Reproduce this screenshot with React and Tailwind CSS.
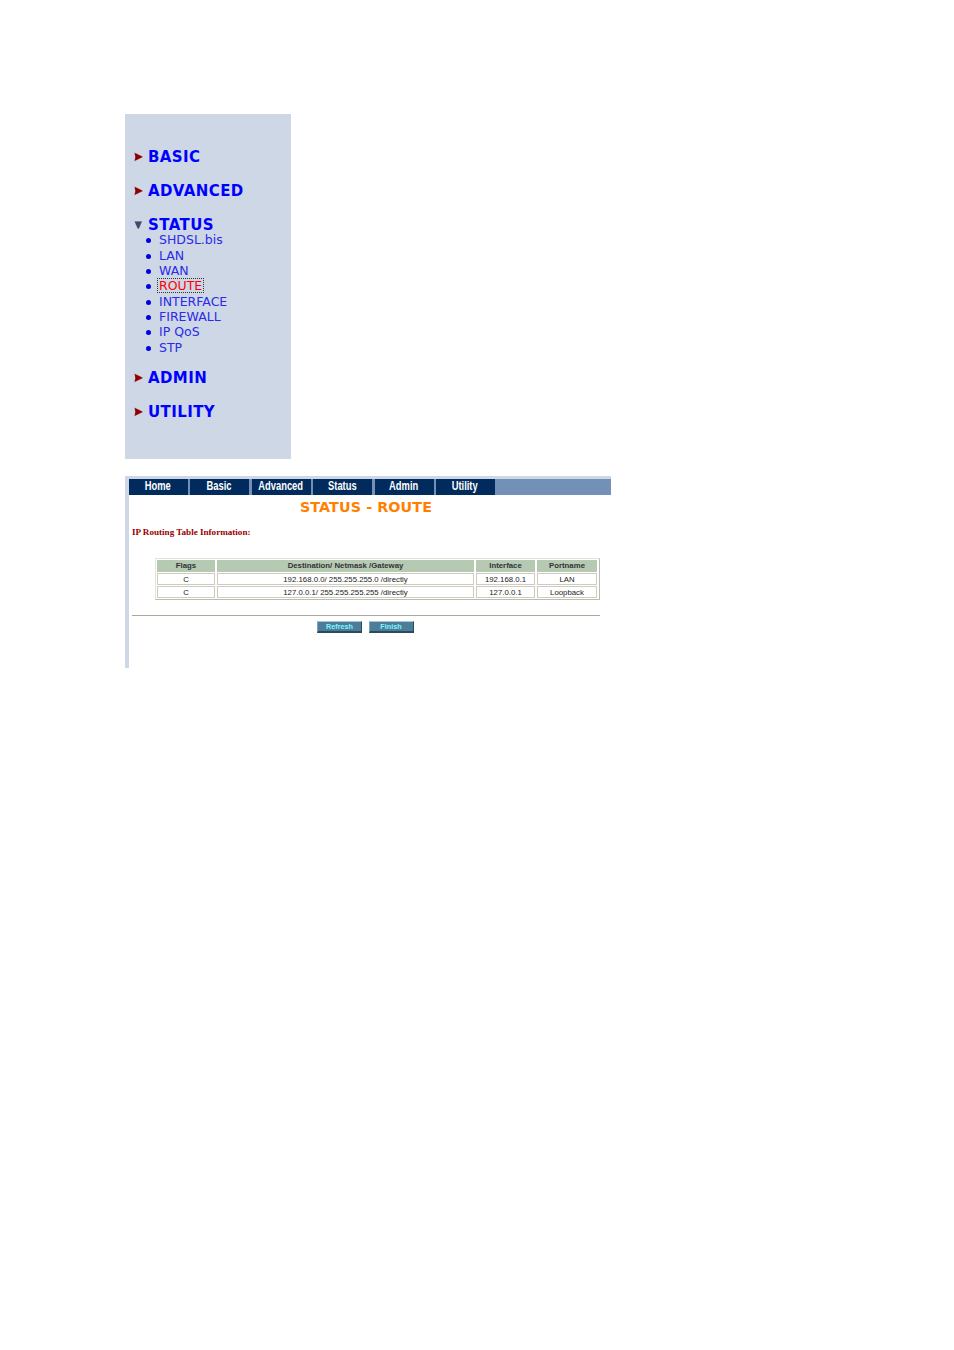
const Arrow = ({ down }) => (
  <svg width="9" height="10" viewBox="0 0 9 10" className="shrink-0">
    {down ? (
      <path d="M0.3 1.2 H8.2 L5 8.8 H3.6 Z" fill="#3f4a72" stroke="#ffffff" strokeOpacity="0.5" strokeWidth="0.4" />
    ) : (
      <path d="M0.4 0.6 L8.6 4.6 V5.2 L0.4 9.2 L1.2 5 Z" fill="#8b0000" stroke="#ffffff" strokeOpacity="0.45" strokeWidth="0.4" />
    )}
  </svg>
);

const Head = ({ label, down }) => (
  <div className="flex items-center h-[18px]">
    <span className="w-[14px] ml-[9px] flex"><Arrow down={down} /></span>
    <span className="text-[15px] leading-[18px] font-bold text-[#0000ff] tracking-[0.4px]">{label}</span>
  </div>
);

const Sub = ({ label, active }) => (
  <div className="flex items-center h-[15.3px]">
    <span className="ml-[21px] w-[13px] flex">
      <span className="w-[5px] h-[5px] rounded-full bg-[#0000e0] mt-[2px]" />
    </span>
    <span className={active ? "text-[12.5px] leading-[13px] text-[#ff0000] outline-1 outline-dotted outline-[#333] -ml-px px-px" : "text-[12.5px] leading-[15px] text-[#2a2ae8]"}>{label}</span>
  </div>
);

const tabs = ["Home", "Basic", "Advanced", "Status", "Admin", "Utility"];

const Cell = ({ children, head }) => (
  <div className={head
    ? "bg-[#b5c9b3] h-[12px] text-[7.8px] leading-[12px] font-bold text-[#333] text-center"
    : "bg-white h-[12px] border border-[#cfccbf] text-[7.8px] leading-[11px] text-[#222] text-center"}>{children}</div>
);

const Btn = ({ label }) => (
  <div className="w-[45px] h-[12px] bg-[#4b7d99] border-t border-t-[#a9c4d2] border-b-2 border-b-[#2a4a60] border-r border-r-[#2a4a60] border-l border-l-[#7fa3b6] text-[7.3px] leading-[10px] font-bold text-[#7ff5ff] text-center">{label}</div>
);

export default function App() {
  return (
    <div className="w-[954px] h-[1350px] bg-white pt-[114px] pl-[125px] font-['DejaVu_Sans',Verdana,sans-serif]">
      <div className="w-[166px] h-[345px] bg-[#cdd7e6] pt-[34px]">
        <Head label="BASIC" />
        <div className="h-[16px]" />
        <Head label="ADVANCED" />
        <div className="h-[16px]" />
        <Head label="STATUS" down />
        <div className="mt-[-1.7px]">
          <Sub label="SHDSL.bis" />
          <Sub label="LAN" />
          <Sub label="WAN" />
          <Sub label="ROUTE" active />
          <Sub label="INTERFACE" />
          <Sub label="FIREWALL" />
          <Sub label="IP QoS" />
          <Sub label="STP" />
        </div>
        <div className="h-[14.7px]" />
        <Head label="ADMIN" />
        <div className="h-[16px]" />
        <Head label="UTILITY" />
      </div>

      <div className="mt-[17px] w-[486px] h-[192px] border-l-[4px] border-t-[3px] border-[#cdd7e6] bg-white">
        <div className="flex h-[16px] bg-[#7390b8] gap-[2.4px]">
          {tabs.map((t) => (
            <div key={t} className="w-[59px] pr-[1px] bg-[#002b5c] text-white text-center text-[12px] leading-[15px] font-bold font-['Liberation_Sans',sans-serif]">
              <span className="inline-block scale-x-[0.78]">{t}</span>
            </div>
          ))}
        </div>
        <div className="text-center text-[14.3px] leading-[18px] mt-[3px] font-bold text-[#ff8000] tracking-[0.1px] pr-[8px]">STATUS - ROUTE</div>
        <div className="mt-[10px] ml-[3px] text-[9.1px] leading-[12px] font-bold text-[#990000] font-['Liberation_Serif',serif]">IP Routing Table Information:</div>
        <div className="mt-[20px] ml-[26px] w-[445px] h-[42px] border border-[#e6e4d8] border-b-[#bdbbb0] border-r-[#bdbbb0] p-[1px] font-['Liberation_Sans',sans-serif]">
          <div className="grid grid-cols-[58px_257px_59px_60px] gap-x-[2px] gap-y-[1px]">
            <Cell head>Flags</Cell>
            <Cell head>Destination/ Netmask /Gateway</Cell>
            <Cell head>Interface</Cell>
            <Cell head>Portname</Cell>
            <Cell>C</Cell>
            <Cell>192.168.0.0/ 255.255.255.0 /directly</Cell>
            <Cell>192.168.0.1</Cell>
            <Cell>LAN</Cell>
            <Cell>C</Cell>
            <Cell>127.0.0.1/ 255.255.255.255 /directly</Cell>
            <Cell>127.0.0.1</Cell>
            <Cell>Loopback</Cell>
          </div>
        </div>
        <div className="mt-[15px] ml-[3px] w-[468px] h-px bg-[#aca899]" />
        <div className="mt-[5px] ml-[188px] flex gap-[6.5px] font-['Liberation_Sans',sans-serif]">
          <Btn label="Refresh" />
          <Btn label="Finish" />
        </div>
      </div>
    </div>
  );
}
